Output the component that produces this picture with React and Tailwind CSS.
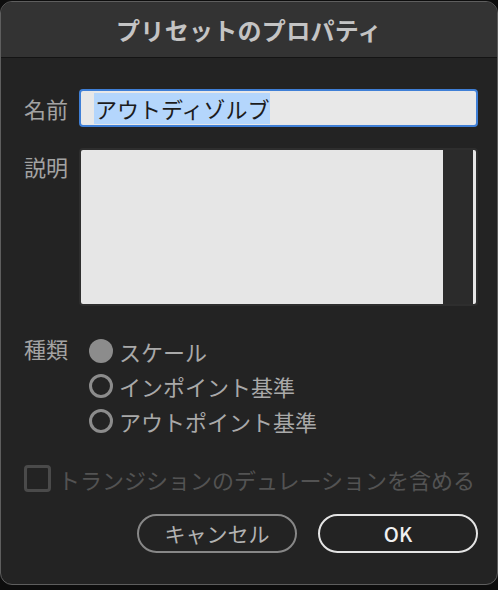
import React from "react";

const F = { fontFamily: '"Noto Sans CJK JP", "Noto Sans", sans-serif' };

function Radio({ checked, label }) {
  return (
    <div className="flex items-center h-[35px]">
      {checked ? (
        <div className="w-[24px] h-[24px] rounded-full bg-[#8c8c8c]" />
      ) : (
        <div className="w-[24px] h-[24px] rounded-full border-[3px] border-[#8c8c8c]" />
      )}
      <span className="ml-[6px] text-[22px] leading-none text-[#a9a9a9]">{label}</span>
    </div>
  );
}

export default function App() {
  return (
    <div className="w-[498px] h-[590px] bg-[#0d0d0d] overflow-hidden" style={F}>
      <div className="h-[584px] mt-[1px] rounded-[12px] border border-[#5e5e5e] bg-[#232323] overflow-hidden flex flex-col">
        <div className="h-[56px] bg-[#333333] border-b border-[#141414] flex items-center justify-center">
          <span className="text-[24px] font-bold text-[#c4c4c4] tracking-[0.3px]">プリセットのプロパティ</span>
        </div>
        <div className="flex flex-col pl-[23px] pr-[19px]">
          {/* Name */}
          <div className="flex items-center mt-[31px]">
            <div className="w-[55px] text-[22px] leading-none text-[#a3a3a3]">名前</div>
            <div className="flex-1 h-[38px] rounded-[4px] border-2 border-[#3f7fd6] bg-[#e8e8e8] flex items-end pl-[13px] pb-[1px]">
              <span className="bg-[#b4d6fc] text-[#1c1c1c] text-[22px] leading-[31px] px-[1px]">アウトディゾルブ</span>
            </div>
          </div>
          {/* Description */}
          <div className="flex items-start mt-[21px]">
            <div className="w-[55px] text-[22px] leading-none text-[#a3a3a3] pt-[7px]">説明</div>
            <div className="flex-1 h-[158px] rounded-[4px] border-2 border-[#2e2e2e] bg-[#e6e6e6] flex overflow-hidden">
              <div className="flex-1" />
              <div className="w-[30px] bg-[#2b2b2b]" />
              <div className="w-[3px]" />
            </div>
          </div>
          {/* Type */}
          <div className="flex items-start mt-[27px]">
            <div className="w-[55px] text-[22px] leading-none text-[#a3a3a3] pt-[4px]">種類</div>
            <div className="flex flex-col ml-[10px]">
              <Radio checked label="スケール" />
              <Radio label="インポイント基準" />
              <Radio label="アウトポイント基準" />
            </div>
          </div>
          {/* Checkbox */}
          <div className="flex items-center mt-[27px]">
            <div className="w-[27px] h-[27px] rounded-[4px] border-[3px] border-[#4a4a4a]" />
            <span className="ml-[7px] text-[22px] leading-none text-[#535353]">トランジションのデュレーションを含める</span>
          </div>
          {/* Buttons */}
          <div className="flex justify-end gap-[21px] mt-[22px]">
            <div className="w-[160px] h-[39px] rounded-full border-2 border-[#878787] flex items-center justify-center text-[21px] text-[#b3b3b3]">
              キャンセル
            </div>
            <div className="w-[160px] h-[39px] rounded-full border-2 border-[#e4e4e4] flex items-center justify-center text-[20px] font-medium text-[#f0f0f0]">
              OK
            </div>
          </div>
        </div>
      </div>
    </div>
  );
}
